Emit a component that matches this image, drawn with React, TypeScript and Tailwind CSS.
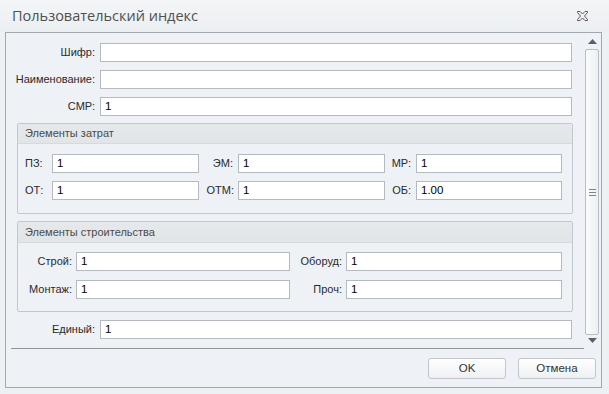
import React from "react";

const Field = ({ w, value }: { w: string; value?: string }) => (
  <div className={`${w} h-[19px] bg-white border border-[#b5bac1] flex items-center px-[4px] text-[11.5px] text-black`}>
    {value}
  </div>
);

function CloseIcon() {
  return (
    <svg width="13" height="12" viewBox="0 0 13 12">
      <path
        d="M1.5 1.5 H4 L6.5 4 L9 1.5 H11.5 V2.5 L8.5 6 L11.5 9.5 V10.5 H9 L6.5 8 L4 10.5 H1.5 V9.5 L4.5 6 L1.5 2.5 Z"
        fill="none"
        stroke="#555"
        strokeWidth="1"
      />
    </svg>
  );
}

function Group({ title, headerH, children }: { title: string; headerH: string; children: React.ReactNode }) {
  return (
    <div className="ml-[11px] w-[556px] h-[91px] border border-[#c3c8ce] rounded-[2px] flex flex-col bg-[#eef2f6]">
      <div className={`${headerH} bg-gradient-to-b from-[#e6e9ec] to-[#e1e5e8] border-b border-[#d6dadd] flex items-center pl-[7px] text-[#4a4a4a] text-[11px]`}>
        {title}
      </div>
      {children}
    </div>
  );
}

export default function App() {
  return (
    <div className="w-[609px] h-[394px] bg-[#eef1f4] flex flex-col font-['Liberation_Sans',sans-serif] text-[11px] text-[#2a2a2a]">
      <div className="h-[32px] flex items-center justify-between pl-[12px] pr-[20px] bg-gradient-to-b from-[#f3f5f7] to-[#eceff2]">
        <span className="font-['Open_Sans',sans-serif] text-[14.5px] text-[#505050] leading-none">
          Пользовательский индекс
        </span>
        <CloseIcon />
      </div>
      <div className="ml-[5px] mr-[7px] h-[356px] border border-[#a3a8ae] bg-[#eef2f6] flex flex-col">
        <div className="flex h-[316px]">
          <div className="w-[578px] flex flex-col">
            <div className="flex-1 flex flex-col pt-[10px]">
              <div className="flex h-[19px] items-center">
                <div className="w-[94px] text-right pr-[5px]">Шифр:</div>
                <Field w="w-[472px]" />
              </div>
              <div className="flex h-[19px] items-center mt-[8px]">
                <div className="w-[94px] text-right pr-[5px]">Наименование:</div>
                <Field w="w-[472px]" />
              </div>
              <div className="flex h-[19px] items-center mt-[8px]">
                <div className="w-[94px] text-right pr-[5px]">СМР:</div>
                <Field w="w-[472px]" value="1" />
              </div>

              <div className="mt-[7px]">
                <Group title="Элементы затрат" headerH="h-[20px]">
                  <div className="pt-[10px] flex flex-col gap-[8px]">
                    <div className="flex h-[19px] items-center">
                      <div className="w-[34px] pl-[7px]">ПЗ:</div>
                      <Field w="w-[147px]" value="1" />
                      <div className="w-[39px] text-right pr-[5px]">ЭМ:</div>
                      <Field w="w-[147px]" value="1" />
                      <div className="w-[31px] text-right pr-[5px]">МР:</div>
                      <Field w="w-[146px]" value="1" />
                    </div>
                    <div className="flex h-[19px] items-center">
                      <div className="w-[34px] pl-[7px]">ОТ:</div>
                      <Field w="w-[147px]" value="1" />
                      <div className="w-[39px] text-right pr-[4px]">ОТМ:</div>
                      <Field w="w-[147px]" value="1" />
                      <div className="w-[31px] text-right pr-[5px]">ОБ:</div>
                      <Field w="w-[146px]" value="1.00" />
                    </div>
                  </div>
                </Group>
              </div>

              <div className="mt-[7px]">
                <Group title="Элементы строительства" headerH="h-[21px]">
                  <div className="pt-[9px] flex flex-col gap-[9px]">
                    <div className="flex h-[19px] items-center">
                      <div className="w-[58px] text-right pr-[4px]">Строй:</div>
                      <Field w="w-[214px]" value="1" />
                      <div className="w-[56px] text-right pr-[4px]">Оборуд:</div>
                      <Field w="w-[216px]" value="1" />
                    </div>
                    <div className="flex h-[19px] items-center">
                      <div className="w-[58px] text-right pr-[4px]">Монтаж:</div>
                      <Field w="w-[214px]" value="1" />
                      <div className="w-[56px] text-right pr-[4px]">Проч:</div>
                      <Field w="w-[216px]" value="1" />
                    </div>
                  </div>
                </Group>
              </div>

              <div className="flex h-[19px] items-center mt-[8px]">
                <div className="w-[94px] text-right pr-[5px]">Единый:</div>
                <Field w="w-[472px]" value="1" />
              </div>
            </div>
            <div className="ml-[5px] h-px bg-[#8f959b]" />
          </div>
          <div className="w-[16px] flex flex-col items-center">
            <div className="h-[14px] flex items-center justify-center pt-[2px]">
              <svg width="9" height="5" viewBox="0 0 9 5">
                <path d="M0 5 L4.5 0 L9 5 Z" fill="#5a6068" />
              </svg>
            </div>
            <div className="mt-[2px] w-[14px] h-[286px] border border-[#b9bec4] rounded-[2px] bg-gradient-to-r from-[#fbfcfc] to-[#eceff1] flex items-center justify-center">
              <div className="flex flex-col gap-[2px]">
                <div className="w-[7px] h-px bg-[#7d838a]" />
                <div className="w-[7px] h-px bg-[#7d838a]" />
                <div className="w-[7px] h-px bg-[#7d838a]" />
              </div>
            </div>
            <div className="h-[10px] flex items-center justify-center">
              <svg width="9" height="5" viewBox="0 0 9 5">
                <path d="M0 0 L9 0 L4.5 5 Z" fill="#5a6068" />
              </svg>
            </div>
          </div>
        </div>
        <div className="flex-1 flex justify-end items-start pt-[9px] pr-[5px] gap-[12px]">
          <button className="w-[78px] h-[21px] border border-[#c2c6cb] rounded-[3px] bg-gradient-to-b from-[#ffffff] to-[#eef0f2] text-[11.5px] text-[#333]">
            OK
          </button>
          <button className="w-[78px] h-[21px] border border-[#c2c6cb] rounded-[3px] bg-gradient-to-b from-[#ffffff] to-[#eef0f2] text-[11.5px] text-[#333]">
            Отмена
          </button>
        </div>
      </div>
    </div>
  );
}
